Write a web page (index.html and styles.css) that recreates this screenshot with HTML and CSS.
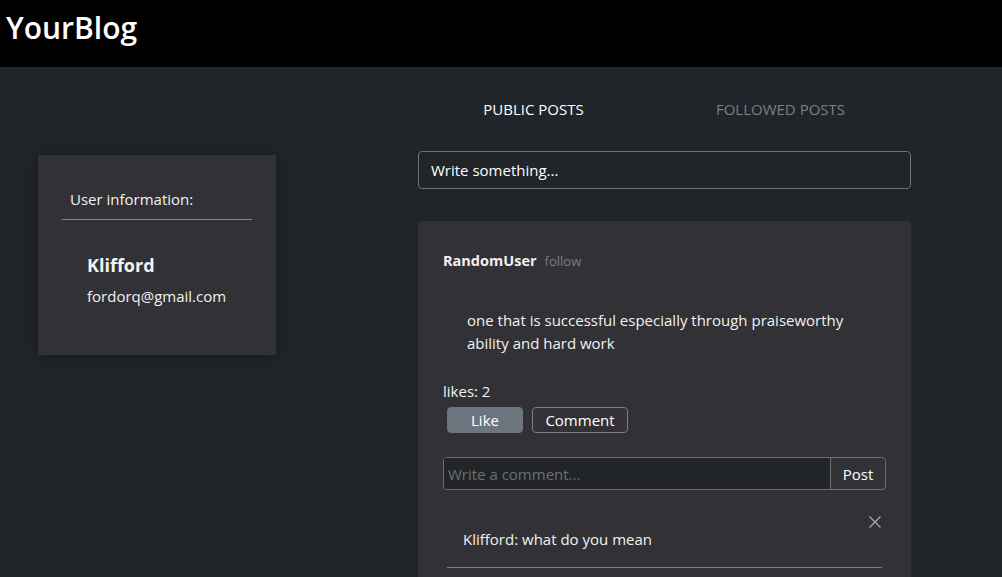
FILE: index.html
```html
<!DOCTYPE html>
<html lang="en">
<head>
<meta charset="utf-8">
<title>YourBlog</title>
<link rel="stylesheet" href="styles.css">
</head>
<body>
<header class="topbar">
  <span class="brand">YourBlog</span>
</header>
<main class="main">
  <aside class="side">
    <div class="user-card">
      <div class="user-head">User information:</div>
      <div class="user-body">
        <div class="user-name">Klifford</div>
        <div class="user-mail">fordorq@gmail.com</div>
      </div>
    </div>
  </aside>
  <section class="feed">
    <nav class="tabs">
      <span class="tab active">PUBLIC POSTS</span>
      <span class="tab">FOLLOWED POSTS</span>
    </nav>
    <input class="new-post" type="text" placeholder="Write something...">
    <article class="post">
      <div class="post-head">
        <span class="author">RandomUser</span>
        <span class="follow">follow</span>
      </div>
      <p class="post-text">one that is successful especially through praiseworthy ability and hard work</p>
      <div class="likes">likes: 2</div>
      <div class="actions">
        <button class="btn btn-like">Like</button>
        <button class="btn btn-comment">Comment</button>
      </div>
      <div class="comment-form">
        <input class="comment-input" type="text" placeholder="Write a comment...">
        <button class="comment-post">Post</button>
      </div>
      <ul class="comments">
        <li class="comment">
          <span class="comment-text">Klifford: what do you mean</span>
          <button class="close" aria-label="Close">
            <svg width="14" height="14" viewBox="0 0 14 14"><path d="M1.5 1.5L12.5 12.5M12.5 1.5L1.5 12.5" stroke="#a5a5a8" stroke-width="1.4" fill="none"/></svg>
          </button>
        </li>
      </ul>
    </article>
  </section>
</main>
</body>
</html>
```
FILE: styles.css
```css
* { box-sizing: border-box; }
html, body { margin: 0; padding: 0; }
body {
  background: #212529;
  color: #f1f1f1;
  font-family: "Open Sans", "Noto Sans", sans-serif;
  font-size: 15px;
  line-height: 24px;
  height: 577px;
  overflow: hidden;
}
.topbar {
  background: #000;
  height: 67px;
  padding: 6px 6px 0;
}
.brand {
  font-size: 30px;
  line-height: 44px;
  color: #fff;
  font-weight: 600;
}
.main {
  display: flex;
  gap: 142px;
  padding-left: 38px;
}
.side { width: 238px; padding-top: 88px; }
.user-card {
  background: #323136;
  height: 200px;
  padding: 32px 24px 0;
  box-shadow: 0 0 16px rgba(0,0,0,.35);
}
.user-head {
  padding: 0 8px 8px;
  border-bottom: 1px solid #84868a;
  line-height: 24px;
}
.user-body { padding: 32px 25px 0; }
.user-name { font-size: 18px; font-weight: 700; line-height: 26px; }
.user-mail { margin-top: 6px; line-height: 24px; }
.feed { width: 493px; padding-top: 30px; }
.tabs { display: flex; height: 24px; margin: 0 7px 0 -8px; }
.tab {
  flex: 1;
  text-align: center;
  color: #7a8087;
  font-size: 15px;
}
.tab.active { color: #fff; }
.new-post {
  display: block;
  width: 100%;
  height: 38px;
  margin-top: 30px;
  background: #212529;
  border: 1px solid #6f7377;
  border-radius: 4px;
  padding: 0 12px;
  color: #fff;
  font: inherit;
  font-size: 15px;
}
.new-post::placeholder { color: #fff; }
.post {
  margin-top: 32px;
  background: #323136;
  border-radius: 4px;
  padding: 29px 25px 40px;
}
.post-head { display: flex; align-items: baseline; gap: 8px; line-height: 22px; }
.author { font-weight: 700; font-size: 14.5px; }
.follow { color: #7b7e83; font-size: 13px; }
.post-text {
  margin: 37px 0 0;
  padding: 0 24px;
  line-height: 23px;
}
.likes { margin-top: 24px; }
.actions { display: flex; gap: 9px; margin-top: 4px; padding-left: 4px; }
.btn {
  height: 26px;
  border-radius: 4px;
  font: inherit;
  font-size: 15px;
  line-height: 24px;
  color: #fff;
  padding: 0 12px;
}
.btn-like {
  background: #6c757d;
  border: 1px solid #6c757d;
  width: 76px;
}
.btn-comment {
  background: transparent;
  border: 1px solid #7c7f84;
  width: 96px;
}
.comment-form {
  display: flex;
  margin-top: 24px;
  height: 33px;
  border: 1px solid #6a6e73;
  border-radius: 4px;
  overflow: hidden;
}
.comment-input {
  flex: 1;
  background: #212529;
  border: 0;
  color: #fff;
  font: inherit;
  font-size: 15px;
  padding: 0 4px;
}
.comment-input::placeholder { color: #6b6f74; }
.comment-post {
  width: 55px;
  background: transparent;
  border: 0;
  border-left: 1px solid #6a6e73;
  color: #fff;
  font: inherit;
  font-size: 15px;
}
.comments { list-style: none; margin: 21px 4px 0; padding: 0; }
.comment {
  position: relative;
  padding: 16px 16px;
  border-bottom: 1px solid #7c7e82;
}
.close {
  position: absolute;
  top: 1px;
  right: -3px;
  width: 20px;
  height: 20px;
  padding: 0;
  border: 0;
  background: transparent;
  display: flex;
  align-items: center;
  justify-content: center;
}
```
